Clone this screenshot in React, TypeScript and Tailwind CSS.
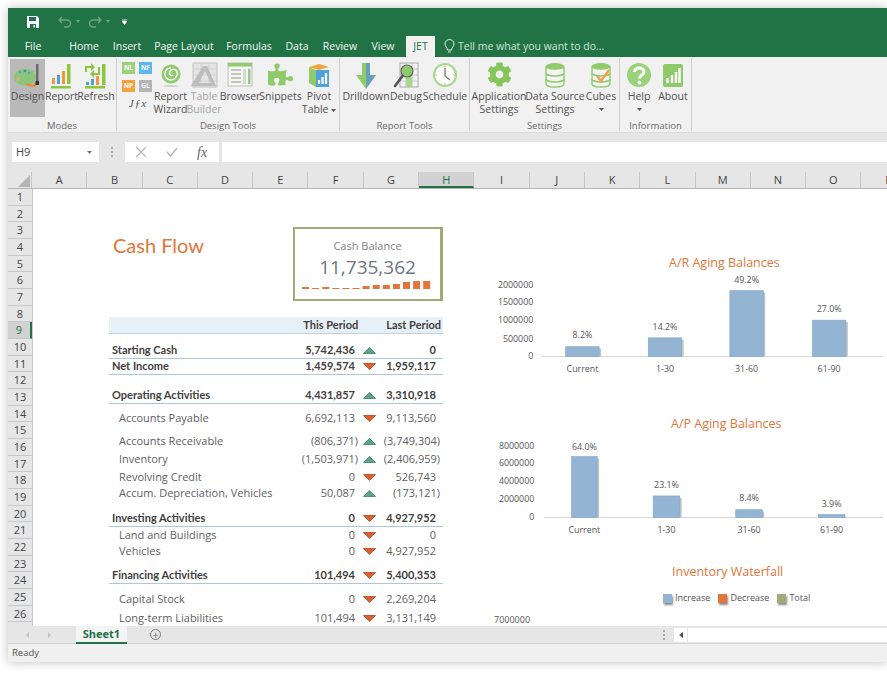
import React from "react";
import { FaCog, FaPuzzlePiece } from "react-icons/fa";

const Up = () => (
  <svg width="13" height="7" viewBox="0 0 13 7" className="block">
    <path d="M6.5 0.5 L12.5 6.5 H0.5 Z" fill="#5aa585" stroke="#3b7f63" strokeWidth="0.8" />
  </svg>
);
const Down = () => (
  <svg width="13" height="7" viewBox="0 0 13 7" className="block">
    <path d="M0.5 0.5 H12.5 L6.5 6.5 Z" fill="#dd5f2f" stroke="#b5431d" strokeWidth="0.8" />
  </svg>
);

const IcoDesign = () => (
  <svg width="28" height="28" viewBox="0 0 28 28">
    <ellipse cx="11" cy="15" rx="11" ry="8.5" fill="#8cc47c" />
    <ellipse cx="4" cy="17" rx="2.5" ry="2" fill="#c9b67a" />
    <circle cx="6" cy="10" r="1.3" fill="#4aa3d8" />
    <circle cx="11" cy="9" r="1.3" fill="#3f7fc4" />
    <circle cx="15" cy="11" r="1.3" fill="#4aa3d8" />
    <path d="M12 21 L19 23 L21 20 L23 22 L21 25 L13 24 Z" fill="#e98a2e" />
    <rect x="22" y="2" width="2.5" height="20" fill="#6d6d6d" />
    <rect x="21.5" y="19" width="3.5" height="4" fill="#333" />
  </svg>
);
const IcoReport = () => (
  <svg width="26" height="28" viewBox="0 0 26 28">
    <rect x="3" y="16" width="3" height="6" fill="#ed9a3c" />
    <rect x="8" y="13" width="3" height="9" fill="#4ea1dc" />
    <rect x="13" y="9" width="3" height="13" fill="#ed9a3c" />
    <rect x="18" y="2" width="3.5" height="20" fill="#8cc63f" />
    <rect x="2" y="24" width="20" height="2.5" fill="#8cc63f" />
  </svg>
);
const IcoRefresh = () => (
  <svg width="26" height="28" viewBox="0 0 26 28">
    <path d="M2 4 H8 V1 L12 5 L8 9 V6 H4 V10 H2 Z" fill="#8cc63f" />
    <path d="M17 13 H11 V16 L7 12 L11 8 V11 H15 V5 H17 Z" fill="#8cc63f" />
    <rect x="3" y="20" width="3" height="3" fill="#4ea1dc" />
    <rect x="8" y="17" width="3" height="6" fill="#4ea1dc" />
    <rect x="13" y="14" width="3" height="9" fill="#ed9a3c" />
    <rect x="19" y="2" width="3.5" height="21" fill="#8cc63f" />
    <rect x="2" y="24" width="20" height="2.5" fill="#8cc63f" />
  </svg>
);
const IcoWizard = () => (
  <svg width="28" height="28" viewBox="0 0 28 28">
    <circle cx="14" cy="12" r="9.5" fill="#8fcb6b" />
    <path d="M14 6 a6 6 0 1 0 5.5 8 a4 4 0 1 0 -7 -3 a2.2 2.2 0 0 0 3.5 2" fill="none" stroke="#fff" strokeWidth="1.5" />
    <ellipse cx="14" cy="24" rx="7" ry="1" fill="#d0d0d0" />
  </svg>
);
const IcoTable = () => (
  <svg width="28" height="28" viewBox="0 0 28 28">
    <rect x="3" y="1" width="24" height="24" fill="#e4e4e4" stroke="#c2c2c2" />
    <path d="M3 7 H27 M3 13 H27 M3 19 H27 M11 1 V25 M19 1 V25" stroke="#cdcdcd" strokeWidth="0.8" />
    <path d="M13 4 H17 L26 24 H1 Z M15 9 L9 21 H21 Z" fill="#bdbdbd" fillRule="evenodd" />
  </svg>
);
const IcoBrowser = () => (
  <svg width="26" height="26" viewBox="0 0 26 26">
    <rect x="1" y="1" width="24" height="23" fill="#f5f5f5" stroke="#bdbdbd" />
    <rect x="1" y="1" width="24" height="3.5" fill="#8fcb6b" />
    <path d="M4 8 H14 M4 12 H14 M4 16 H14 M4 20 H14" stroke="#8a9a80" strokeWidth="1.2" />
    <rect x="16" y="7" width="3" height="15" fill="#cfe0c4" />
    <rect x="21" y="7" width="2.5" height="15" fill="#9fc68a" />
  </svg>
);
const IcoPivot = () => (
  <svg width="26" height="28" viewBox="0 0 26 28">
    <path d="M3 5 L13 2 L23 5 L13 8 Z" fill="#f2a33c" />
    <path d="M3 5 V21 L10 25 V8 Z" fill="#8fcb6b" />
    <path d="M10 8 H23 V25 H10 Z" fill="#4ea1dc" />
    <path d="M13 22 V18 M16.5 22 V15 M20 22 V11" stroke="#fff" strokeWidth="2.2" />
  </svg>
);
const IcoDrill = () => (
  <svg width="26" height="28" viewBox="0 0 26 28">
    <path d="M9 1 H17 V13 H23 L13 27 L3 13 H9 Z" fill="#8fcb6b" />
    <path d="M13 1 H17 V13 H23 L13 27 Z" fill="#5b93d6" opacity="0.75" />
  </svg>
);
const IcoDebug = () => (
  <svg width="28" height="28" viewBox="0 0 28 28">
    <rect x="8" y="1" width="18" height="24" fill="#f4f4f4" stroke="#aaa" />
    <path d="M8 7 H26 M8 13 H26 M8 19 H26 M14 1 V25 M20 1 V25" stroke="#b5b5b5" strokeWidth="0.7" />
    <rect x="14" y="7" width="6" height="18" fill="#a5d88a" />
    <circle cx="15" cy="9" r="6" fill="#8fcb6b" stroke="#666" strokeWidth="1.2" />
    <path d="M10.5 14 L3 24" stroke="#555" strokeWidth="2.6" strokeLinecap="round" />
  </svg>
);
const IcoClock = () => (
  <svg width="26" height="26" viewBox="0 0 26 26">
    <circle cx="13" cy="13" r="11" fill="#fff" stroke="#a9d98f" strokeWidth="2.2" />
    <path d="M13 3 V5 M13 21 V23 M3 13 H5 M21 13 H23" stroke="#e8b96a" strokeWidth="1.2" />
    <path d="M13 6 V14 L18 18" fill="none" stroke="#777" strokeWidth="1.3" />
  </svg>
);
const IcoDb = ({ check }: { check?: boolean }) => (
  <svg width="22" height="26" viewBox="0 0 22 26">
    <ellipse cx="11" cy="4" rx="9" ry="3" fill="#8fcb6b" />
    <path d="M2 4 V22 A9 3 0 0 0 20 22 V4 A9 3 0 0 1 2 4 Z" fill="#f5f5f5" stroke="#8fcb6b" strokeWidth="1.4" />
    <path d="M2 11 A9 3 0 0 0 20 11 M2 17 A9 3 0 0 0 20 17" fill="none" stroke="#8fcb6b" strokeWidth="1.6" />
    {check ? <path d="M7 14 L11 19 L19 8" fill="none" stroke="#f0a14a" strokeWidth="2.4" /> : null}
  </svg>
);
const IcoHelp = () => (
  <svg width="26" height="26" viewBox="0 0 26 26">
    <circle cx="13" cy="13" r="12" fill="#9ad27c" />
    <path d="M8.5 10 C8.5 4.5 18 4.5 18 10 C18 13.5 13.5 13 13.5 16.5" fill="none" stroke="#fff" strokeWidth="3" />
    <circle cx="13.5" cy="20.5" r="1.9" fill="#fff" />
  </svg>
);
const IcoAbout = () => (
  <svg width="22" height="26" viewBox="0 0 22 26">
    <rect x="1" y="2" width="20" height="23" rx="2" fill="#8fcb6b" />
    <path d="M5.5 21 V16 M10 21 V13 M14 21 V10 M17.5 21 V6" stroke="#fff" strokeWidth="2.4" />
  </svg>
);

const Caret = () => (
  <svg width="5" height="3" viewBox="0 0 5 3" className="inline-block align-middle">
    <path d="M0 0 H5 L2.5 3 Z" fill="#555" />
  </svg>
);

function Btn(props: { w: string; icon?: React.ReactNode; a: string; b?: React.ReactNode; caret?: boolean; muted?: boolean; active?: boolean }) {
  return (
    <div
      className={`${props.w} flex flex-col items-center shrink-0 h-[58px] ${props.active ? "bg-[#b9b9b9]" : ""} ${props.muted ? "text-[#a6a6a6]" : "text-[#505050]"}`}
    >
      <div className="h-[31px] pt-[3px] flex items-start justify-center">{props.icon}</div>
      <div className="leading-[13px] whitespace-nowrap">{props.a}</div>
      {props.b ? <div className="leading-[13px] whitespace-nowrap">{props.b}</div> : null}
      {props.caret ? <div className="leading-[13px] h-[13px] flex items-center"><Caret /></div> : null}
    </div>
  );
}

function Group(props: { w: string; label: string; children: React.ReactNode; pl?: string }) {
  return (
    <div className={`${props.w} shrink-0 flex flex-col border-r border-[#cfcfcf] h-[73px] mt-[1px]`}>
      <div className={`flex h-[58px] mt-[1px] ${props.pl ?? ""}`}>{props.children}</div>
      <div className="text-center text-[9.5px] leading-[13px] pt-[2px] text-[#6a6a6a]">{props.label}</div>
    </div>
  );
}

const Tile = ({ t, c }: { t: string; c: string }) => (
  <div className={`w-[13px] h-[12px] flex items-center justify-center text-white font-bold text-[6.5px] ${c}`}>{t}</div>
);

type Row = { l: string; v: string; d?: "u" | "n"; last: string; bold?: boolean; line?: boolean; mt: string };
const rows: Row[] = [
  { l: "Starting Cash", v: "5,742,436", d: "u", last: "0", bold: true, line: true, mt: "mt-[9px]" },
  { l: "Net Income", v: "1,459,574", d: "n", last: "1,959,117", bold: true, line: true, mt: "mt-0" },
  { l: "Operating Activities", v: "4,431,857", d: "u", last: "3,310,918", bold: true, line: true, mt: "mt-[13px]" },
  { l: "Accounts Payable", v: "6,692,113", d: "n", last: "9,113,560", mt: "mt-[6px]" },
  { l: "Accounts Receivable", v: "(806,371)", d: "u", last: "(3,749,304)", mt: "mt-[7px]" },
  { l: "Inventory", v: "(1,503,971)", d: "u", last: "(2,406,959)", mt: "mt-[2px]" },
  { l: "Revolving Credit", v: "0", d: "n", last: "526,743", mt: "mt-[2px]" },
  { l: "Accum. Depreciation, Vehicles", v: "50,087", d: "u", last: "(173,121)", mt: "mt-0" },
  { l: "Investing Activities", v: "0", d: "n", last: "4,927,952", bold: true, line: true, mt: "mt-[10px]" },
  { l: "Land and Buildings", v: "0", d: "n", last: "0", mt: "mt-0" },
  { l: "Vehicles", v: "0", d: "n", last: "4,927,952", mt: "mt-0" },
  { l: "Financing Activities", v: "101,494", d: "n", last: "5,400,353", bold: true, line: true, mt: "mt-[9px]" },
  { l: "Capital Stock", v: "0", d: "n", last: "2,269,204", mt: "mt-[7px]" },
  { l: "Long-term Liabilities", v: "101,494", d: "n", last: "3,131,149", mt: "mt-[3px]" },
];

function Chart(props: {
  vb: string; h: number; axis: number; axisX: number; labelX: number;
  ticks: [string, number][];
  bars: { x: number; w: number; top: number; pct: string; py: number; cat: string }[];
}) {
  return (
    <svg width="444" height={props.h} viewBox={props.vb} className="block" fontFamily="'Open Sans', sans-serif" fontSize="9" fill="#555">
      <line x1={props.axisX} x2="887" y1={props.axis} y2={props.axis} stroke="#d4d4d4" />
      {props.ticks.map(([t, y]) => (
        <text key={t} x={props.labelX} y={y + 3} textAnchor="end">{t}</text>
      ))}
      {props.bars.map((b) => (
        <g key={b.cat}>
          <rect x={b.x + 2} y={b.top + 2} width={b.w} height={props.axis - b.top - 2} fill="#c4c4c4" />
          <rect x={b.x} y={b.top} width={b.w} height={props.axis - b.top} fill="#93b4d3" stroke="#84a9cc" strokeWidth="0.7" />
          <text x={b.x + b.w / 2} y={b.py + 3} textAnchor="middle">{b.pct}</text>
          <text x={b.x + b.w / 2} y={props.axis + 16} textAnchor="middle">{b.cat}</text>
        </g>
      ))}
    </svg>
  );
}

const cols = ["A", "B", "C", "D", "E", "F", "G", "H", "I", "J", "K", "L", "M", "N", "O", "P"];
const spark = [2, 1, 2, 1, 1, 1, 3, 4, 4, 5, 7, 8, 8];

const Legend = ({ c, t }: { c: string; t: string }) => (
  <div className="flex items-center gap-[3px]">
    <div className={`w-[9px] h-[9px] ${c} shadow-[1px_2px_2px_#888]`} />
    <span>{t}</span>
  </div>
);

export default function App() {
  return (
    <div className="w-[887px] h-[680px] bg-white overflow-hidden pt-2 pl-2 font-['Open_Sans',sans-serif]">
      <div className="w-[879px] h-[654px] flex flex-col bg-white shadow-[0_0_10px_rgba(0,0,0,0.25)] overflow-hidden">
        {/* Title / QAT */}
        <div className="h-[27px] bg-[#217346] flex items-center shrink-0">
          <svg width="14" height="14" viewBox="0 0 14 14" className="ml-[18px]">
            <path d="M1 1 H11 L13 3 V13 H1 Z" fill="#fff" />
            <rect x="3" y="2" width="7" height="4" fill="#217346" />
            <rect x="4" y="9" width="6" height="4" fill="#217346" />
            <rect x="7.5" y="10" width="1.4" height="2.4" fill="#fff" />
          </svg>
          <svg width="14" height="12" viewBox="0 0 14 12" className="ml-[18px]">
            <path d="M4 1 L1 4 L4 7 M1 4 H9 A3.5 3.5 0 0 1 9 11 H6" fill="none" stroke="#6fa588" strokeWidth="1.3" />
          </svg>
          <svg width="4" height="3" viewBox="0 0 4 3" className="ml-[4px]"><path d="M0 0 H4 L2 3 Z" fill="#6fa588" /></svg>
          <svg width="14" height="12" viewBox="0 0 14 12" className="ml-[8px]">
            <path d="M10 1 L13 4 L10 7 M13 4 H5 A3.5 3.5 0 0 0 5 11 H8" fill="none" stroke="#6fa588" strokeWidth="1.3" />
          </svg>
          <svg width="4" height="3" viewBox="0 0 4 3" className="ml-[4px]"><path d="M0 0 H4 L2 3 Z" fill="#6fa588" /></svg>
          <svg width="5" height="6" viewBox="0 0 5 6" className="ml-[12px]"><path d="M0 0 H5 M0 2 H5 L2.5 5.5 L0 2" fill="#fff" stroke="#fff" strokeWidth="0.8" /></svg>
        </div>
        {/* Tabs */}
        <div className="h-[22px] bg-[#217346] flex items-end text-[10.5px] text-[#f0f6f2] shrink-0 relative">
          <div className="flex h-[21px] items-center">
            <span className="w-[50px] text-center">File</span>
            <span className="ml-[0px] w-[52px] text-center">Home</span>
            <span className="w-[34px] text-center">Insert</span>
            <span className="w-[80px] text-center">Page Layout</span>
            <span className="w-[50px] text-center">Formulas</span>
            <span className="w-[46px] text-center">Data</span>
            <span className="w-[40px] text-center">Review</span>
            <span className="w-[46px] text-center">View</span>
          </div>
          <div className="w-[29px] h-[21px] bg-[#f1f1f1] text-[#217346] flex items-center justify-center">JET</div>
          <div className="flex items-center h-[21px] ml-[9px] gap-[3px] text-[#cfe3d7]">
            <svg width="11" height="15" viewBox="0 0 11 15">
              <path d="M3.5 11 C3.5 8.5 1 7.5 1 5 A4.5 4.5 0 0 1 10 5 C10 7.5 7.5 8.5 7.5 11 Z M4 13 H7" fill="none" stroke="#dfeee5" strokeWidth="1" />
            </svg>
            <span>Tell me what you want to do...</span>
          </div>
        </div>
        {/* Ribbon */}
        <div className="h-[76px] bg-[#f1f1f1] flex text-[10.5px] shrink-0 border-b border-[#dcdcdc]">
          <Group w="w-[109px]" label="Modes" pl="pl-[2px]">
            <Btn w="w-[35px]" icon={<IcoDesign />} a="Design" active />
            <Btn w="w-[33px]" icon={<IcoReport />} a="Report" />
            <Btn w="w-[36px]" icon={<IcoRefresh />} a="Refresh" />
          </Group>
          <Group w="w-[223px]" label="Design Tools">
            <div className="w-[37px] pl-[5px] flex flex-col shrink-0">
              <div className="grid grid-cols-[13px_13px] gap-x-[4px] gap-y-[6px] mt-[3px]">
                <Tile t="NL" c="bg-[#9ad27c]" />
                <Tile t="NF" c="bg-[#5cb8ec]" />
                <Tile t="NP" c="bg-[#f5a13c]" />
                <Tile t="GL" c="bg-[#b5b5b5]" />
              </div>
              <div className="text-center italic font-['Liberation_Serif',serif] text-[11px] mt-[3px] text-[#555] tracking-[1px]">Jƒx</div>
            </div>
            <Btn w="w-[33px]" icon={<IcoWizard />} a="Report" b="Wizard" />
            <Btn w="w-[34px]" icon={<IcoTable />} a="Table" b="Builder" muted />
            <Btn w="w-[38px]" icon={<IcoBrowser />} a="Browser" />
            <Btn w="w-[43px]" icon={<FaPuzzlePiece className="text-[#8fcb6b] w-[25px] h-[25px]" />} a="Snippets" />
            <Btn w="w-[34px]" icon={<IcoPivot />} a="Pivot" b={<>Table <Caret /></>} />
          </Group>
          <Group w="w-[130px]" label="Report Tools" pl="pl-[4px]">
            <Btn w="w-[44px]" icon={<IcoDrill />} a="Drilldown" />
            <Btn w="w-[36px]" icon={<IcoDebug />} a="Debug" />
            <Btn w="w-[42px]" icon={<IcoClock />} a="Schedule" />
          </Group>
          <Group w="w-[150px]" label="Settings" pl="pl-[3px]">
            <Btn w="w-[52px]" icon={<FaCog className="text-[#85c559] w-[25px] h-[25px]" />} a="Application" b="Settings" />
            <Btn w="w-[60px]" icon={<IcoDb />} a="Data Source" b="Settings" />
            <Btn w="w-[32px]" icon={<IcoDb check />} a="Cubes" caret />
          </Group>
          <Group w="w-[72px]" label="Information" pl="pl-[2px]">
            <Btn w="w-[34px]" icon={<IcoHelp />} a="Help" caret />
            <Btn w="w-[34px]" icon={<IcoAbout />} a="About" />
          </Group>
        </div>
        {/* Formula bar */}
        <div className="h-[39px] bg-[#e6e6e6] flex items-start pt-[9px] shrink-0">
          <div className="ml-[4px] w-[87px] h-[20px] bg-white flex items-center justify-between pl-[4px] pr-[7px] text-[11px] text-[#444]">
            <span>H9</span>
            <svg width="5" height="3" viewBox="0 0 5 3"><path d="M0 0 H5 L2.5 3 Z" fill="#777" /></svg>
          </div>
          <div className="w-[26px] h-[20px] flex flex-col items-center justify-center gap-[2px]">
            <div className="w-[2px] h-[2px] bg-[#aaa]" />
            <div className="w-[2px] h-[2px] bg-[#aaa]" />
            <div className="w-[2px] h-[2px] bg-[#aaa]" />
          </div>
          <div className="w-[94px] h-[20px] bg-white flex items-center text-[#b5b5b5]">
            <svg width="12" height="12" viewBox="0 0 12 12" className="ml-[10px]"><path d="M1 1 L11 11 M11 1 L1 11" stroke="#b5b5b5" strokeWidth="1.2" /></svg>
            <svg width="12" height="10" viewBox="0 0 12 10" className="ml-[19px]"><path d="M1 5 L4.5 9 L11 1" fill="none" stroke="#b5b5b5" strokeWidth="1.4" /></svg>
            <span className="ml-[19px] italic font-['Liberation_Serif',serif] text-[14px] text-[#666]">fx</span>
          </div>
          <div className="ml-[3px] flex-1 h-[20px] bg-white" />
        </div>
        {/* Col headers */}
        <div className="h-[17px] bg-[#e6e6e6] flex border-b border-[#b5b5b5] shrink-0 overflow-hidden text-[11px] text-[#444]">
          <div className="w-[24px] shrink-0 flex items-end justify-end pr-[1px] pb-[1px] border-r border-[#c8c8c8]">
            <svg width="12" height="12" viewBox="0 0 12 12"><path d="M12 0 V12 H0 Z" fill="#b5b5b5" /></svg>
          </div>
          {cols.map((c) => (
            <div
              key={c}
              className={`w-[55.3px] shrink-0 text-center leading-[16px] border-r border-[#c8c8c8] ${c === "H" ? "bg-[#d2d2d2] text-[#217346] border-b-2 border-b-[#217346]" : ""}`}
            >
              {c}
            </div>
          ))}
        </div>
        {/* Sheet */}
        <div className="flex-1 flex overflow-hidden min-h-0">
          <div className="w-[25px] shrink-0 bg-[#e6e6e6] border-r border-[#c8c8c8]">
            {Array.from({ length: 27 }, (_, i) => i + 1).map((n) => (
              <div
                key={n}
                className={`h-[16.68px] text-[11px] leading-[16px] text-center border-b border-[#c8c8c8] ${n === 9 ? "bg-[#d2d2d2] text-[#217346] border-r-2 border-r-[#217346]" : "text-[#444]"}`}
              >
                {n < 27 ? n : ""}
              </div>
            ))}
          </div>
          {/* Left report */}
          <div className="w-[410px] shrink-0 pl-[76px] pt-[38px]">
            <div className="flex justify-between items-start h-[74px]">
              <div className="pl-[4px] mt-[4px] text-[20px] leading-[28px] text-[#e2763a] font-['Lato',sans-serif]">Cash Flow</div>
              <div className="w-[150px] h-[74px] border-2 border-[#a4a97a] border-r-[3px] flex flex-col items-center">
                <div className="text-[11px] leading-[14px] mt-[10px] text-[#7f7f88]">Cash Balance</div>
                <div className="text-[19px] leading-[24px] mt-[2px] text-[#6f7680]">11,735,362</div>
                <svg width="134" height="9" viewBox="0 0 134 9" className="mt-[1px] block">
                  {spark.map((h, i) => (
                    <rect key={i} x={i * 10.1 + 1} y={9 - h} width="7" height={h} fill="#e2763a" />
                  ))}
                </svg>
              </div>
            </div>
            <div className="mt-[16px] h-[17px] bg-[#e8f0f7] border-b border-[#bcd2e6] flex items-center justify-end text-[11px] font-['Lato',sans-serif] font-bold text-[#404040]">
              <span className="mr-[28px]">This Period</span>
              <span className="mr-[2px]">Last Period</span>
            </div>
            {rows.map((r) => (
              <div
                key={r.l}
                className={`${r.mt} h-[16px] flex items-center text-[11px] ${r.line ? "border-b border-[#a9c7e2]" : ""} ${r.bold ? "font-['Lato',sans-serif] font-bold text-[#404040] text-[11.5px]" : "text-[#5f5f5f]"}`}
              >
                <span className={`flex-1 whitespace-nowrap ${r.bold ? "pl-[3px]" : "pl-[10px]"}`}>{r.l}</span>
                <span className={`whitespace-nowrap ${r.v.endsWith(")") ? "mr-[-3px]" : ""}`}>{r.v}</span>
                <span className="w-[28px] flex justify-center shrink-0 pl-[1px]">{r.d === "u" ? <Up /> : <Down />}</span>
                <span className={`w-[60px] text-right whitespace-nowrap ${r.last.endsWith(")") ? "pr-[3px]" : "pr-[7px]"}`}>{r.last}</span>
              </div>
            ))}
          </div>
          {/* Right charts */}
          <div className="flex-1 min-w-0 pt-[64px] flex flex-col">
            <div className="ml-[226px] h-[20px] text-[12.5px] leading-[20px] text-[#e2763a] whitespace-nowrap">A/R Aging Balances</div>
            <Chart
              vb="443 272 444 108" h={108} axis={357} axisX={540} labelX={531}
              ticks={[["2000000", 284], ["1500000", 302], ["1000000", 320], ["500000", 339], ["0", 357]]}
              bars={[
                { x: 564, w: 34, top: 347, pct: "8.2%", py: 335, cat: "Current" },
                { x: 648, w: 34, top: 338, pct: "14.2%", py: 327, cat: "1-30" },
                { x: 731, w: 34, top: 290, pct: "49.2%", py: 279, cat: "31-60" },
                { x: 815, w: 34, top: 320, pct: "27.0%", py: 309, cat: "61-90" },
              ]}
            />
            <div className="ml-[228px] mt-[35px] h-[20px] text-[12.5px] leading-[20px] text-[#e2763a] whitespace-nowrap">A/P Aging Balances</div>
            <Chart
              vb="443 435 444 110" h={110} axis={520} axisX={542} labelX={532}
              ticks={[["8000000", 447], ["6000000", 465], ["4000000", 483], ["2000000", 501], ["0", 520]]}
              bars={[
                { x: 570, w: 26, top: 458, pct: "64.0%", py: 448, cat: "Current" },
                { x: 653, w: 27, top: 498, pct: "23.1%", py: 487, cat: "1-30" },
                { x: 737, w: 27, top: 512, pct: "8.4%", py: 500, cat: "31-60" },
                { x: 821, w: 27, top: 517, pct: "3.9%", py: 506, cat: "61-90" },
              ]}
            />
            <div className="ml-[229px] mt-[20px] h-[20px] text-[12.5px] leading-[20px] text-[#e2763a] whitespace-nowrap">Inventory Waterfall</div>
            <div className="ml-[220px] mt-[8px] h-[16px] flex items-center gap-[8px] text-[9px] text-[#555]">
              <Legend c="bg-[#93b4d3]" t="Increase" />
              <Legend c="bg-[#e2763a]" t="Decrease" />
              <Legend c="bg-[#a4a97a]" t="Total" />
            </div>
            <div className="ml-[51px] mt-[8px] text-[9px] leading-[12px] text-[#555]">7000000</div>
          </div>
        </div>
        {/* Sheet tabs */}
        <div className="h-[18px] bg-[#e6e6e6] flex items-center shrink-0 relative border-b border-[#d4d4d4]">
          <svg width="30" height="6" viewBox="0 0 30 6" className="ml-[18px]">
            <path d="M3 0 L0 3 L3 6 Z M22 0 L25 3 L22 6 Z" fill="#c0c0c0" />
          </svg>
          <div className="ml-[20px] w-[51px] h-[18px] bg-[#f4f4f4] border-b-2 border-[#217346] text-[#217346] font-bold text-[11px] leading-[15px] text-center">Sheet1</div>
          <div className="ml-[23px] w-[11px] h-[11px] rounded-full border border-[#777] flex items-center justify-center text-[10px] leading-none text-[#666]">+</div>
          <div className="ml-[502px] w-[2px] flex flex-col gap-[2px]">
            <div className="h-[2px] bg-[#aaa]" />
            <div className="h-[2px] bg-[#aaa]" />
            <div className="h-[2px] bg-[#aaa]" />
          </div>
          <div className="ml-[9px] w-[13px] h-[14px] bg-white flex items-center justify-center">
            <svg width="4" height="6" viewBox="0 0 4 6"><path d="M4 0 V6 L0 3 Z" fill="#555" /></svg>
          </div>
          <div className="ml-[1px] flex-1 h-[14px] bg-white" />
        </div>
        {/* Status */}
        <div className="h-[18px] bg-[#f0f0f0] flex items-center pl-[4px] text-[9.5px] text-[#555] shrink-0">Ready</div>
      </div>
    </div>
  );
}
